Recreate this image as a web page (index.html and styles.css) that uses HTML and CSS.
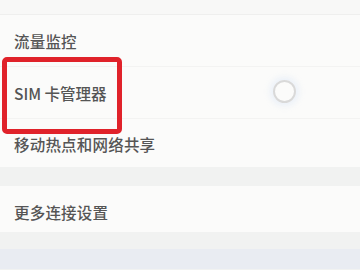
FILE: index.html
```html
<!DOCTYPE html>
<html lang="zh-CN">
<head>
<meta charset="utf-8">
<link rel="stylesheet" href="styles.css">
</head>
<body>
<div class="page">
  <section class="card card-top">
    <div class="cut"></div>
    <div class="row"><span class="label">流量监控</span></div>
    <div class="row row-sim"><span class="label">SIM 卡管理器</span><span class="toggle"></span></div>
    <div class="row row-last"><span class="label">移动热点和网络共享</span></div>
    <div class="highlight"></div>
  </section>
  <div class="gap"></div>
  <section class="card card-more">
    <div class="row row-more"><span class="label">更多连接设置</span></div>
  </section>
  <div class="gap gap-small"></div>
  <div class="bottom"></div>
</div>
</body>
</html>
```

FILE: styles.css
```css
html, body {
  margin: 0;
  padding: 0;
  background: #f1f2f1;
}
.page {
  width: 360px;
  height: 270px;
  overflow: hidden;
  font-family: "Noto Sans CJK SC", "Noto Sans", sans-serif;
}
.card {
  background: #fbfbfa;
  position: relative;
}
.cut {
  height: 14px;
  background: #f8f8f7;
  border-bottom: 1px solid #efefee;
}
.row {
  height: 52px;
  box-sizing: border-box;
  padding: 16px 0 0 14px;
  display: flex;
  align-items: flex-start;
  justify-content: space-between;
  border-bottom: 1px solid #f3f3f2;
}
.row-last {
  height: 48px;
  border-bottom: none;
  padding-top: 15px;
}
.label {
  font-size: 15.5px;
  line-height: 20px;
  color: #555555;
  font-weight: 500;
  letter-spacing: 0.2px;
}
.row-sim .label {
  letter-spacing: 0;
}
.toggle {
  width: 19px;
  height: 19px;
  border-radius: 50%;
  border: 2px solid #d9d9d9;
  margin: -3px 64px 0 0;
  box-shadow: 0 0 6px 3px rgba(230, 238, 248, 0.8);
}
.highlight {
  position: absolute;
  left: 2px;
  top: 57px;
  width: 120px;
  height: 77px;
  box-sizing: border-box;
  border: 5px solid #e0222a;
  border-radius: 5px;
}
.gap {
  height: 19px;
}
.gap-small {
  height: 17px;
}
.card-more .row-more {
  height: 46px;
  border-bottom: none;
  padding-top: 16px;
}
.bottom {
  height: 20px;
  background: #e9ecf2;
}
```
